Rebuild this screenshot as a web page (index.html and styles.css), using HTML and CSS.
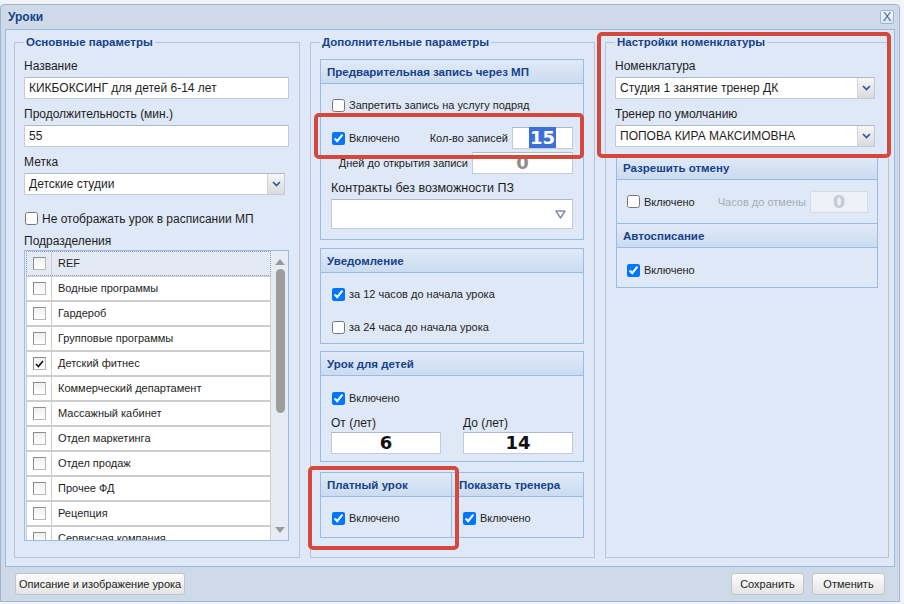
FILE: index.html
```html
<!DOCTYPE html>
<html lang="ru">
<head>
  <meta charset="UTF-8">
  <title>Уроки</title>
  <link rel="stylesheet" href="styles.css">
</head>
<body>
  <div class="window">
    <!-- Title bar -->
    <div class="window-head">
      <span class="window-title">Уроки</span>
      <span class="window-close">X</span>
    </div>

    <div class="window-body">
      <!-- Main parameters -->
      <fieldset class="group">
        <legend>Основные параметры</legend>
        <div class="field-label first">Название</div>
        <div class="text-field">КИКБОКСИНГ для детей 6-14 лет</div>
        <div class="field-label">Продолжительность (мин.)</div>
        <div class="text-field">55</div>
        <div class="field-label">Метка</div>
        <div class="combo combo-short">
          <span class="combo-text">Детские студии</span>
          <span class="combo-trigger"><svg width="9" height="6" viewBox="0 0 9 6"><path d="M1 1 L4.5 4.5 L8 1" stroke="#2f5797" stroke-width="1.7" fill="none"/></svg></span>
        </div>
        <label class="check check-hide"><input type="checkbox"> Не отображать урок в расписании МП</label>
        <div class="field-label grid-label">Подразделения</div>

        <div class="grid">
          <div class="grid-rows">
            <div class="grid-row selected"><span class="grid-check"><span class="gbox"></span></span><span class="grid-text">REF</span></div>
            <div class="grid-row"><span class="grid-check"><span class="gbox"></span></span><span class="grid-text">Водные программы</span></div>
            <div class="grid-row"><span class="grid-check"><span class="gbox"></span></span><span class="grid-text">Гардероб</span></div>
            <div class="grid-row"><span class="grid-check"><span class="gbox"></span></span><span class="grid-text">Групповые программы</span></div>
            <div class="grid-row"><span class="grid-check"><span class="gbox"><svg width="9" height="8" viewBox="0 0 9 8"><path d="M1 4 L3.4 6.5 L8 1" stroke="#111" stroke-width="1.6" fill="none"/></svg></span></span><span class="grid-text">Детский фитнес</span></div>
            <div class="grid-row"><span class="grid-check"><span class="gbox"></span></span><span class="grid-text">Коммерческий департамент</span></div>
            <div class="grid-row"><span class="grid-check"><span class="gbox"></span></span><span class="grid-text">Массажный кабинет</span></div>
            <div class="grid-row"><span class="grid-check"><span class="gbox"></span></span><span class="grid-text">Отдел маркетинга</span></div>
            <div class="grid-row"><span class="grid-check"><span class="gbox"></span></span><span class="grid-text">Отдел продаж</span></div>
            <div class="grid-row"><span class="grid-check"><span class="gbox"></span></span><span class="grid-text">Прочее ФД</span></div>
            <div class="grid-row"><span class="grid-check"><span class="gbox"></span></span><span class="grid-text">Рецепция</span></div>
            <div class="grid-row"><span class="grid-check"><span class="gbox"></span></span><span class="grid-text">Сервисная компания</span></div>
          </div>
          <div class="grid-scroll">
            <svg width="10" height="6" viewBox="0 0 10 6"><path d="M5 0 L10 6 L0 6 Z" fill="#9b9b9b"/></svg>
            <span class="scroll-thumb"></span>
            <svg class="scroll-down" width="10" height="6" viewBox="0 0 10 6"><path d="M0 0 L10 0 L5 6 Z" fill="#9b9b9b"/></svg>
          </div>
        </div>
      </fieldset>

      <!-- Extra parameters -->
      <fieldset class="group">
        <legend>Дополнительные параметры</legend>

        <div class="panel panel-booking">
          <div class="panel-head">Предварительная запись через МП</div>
          <div class="panel-body booking-body">
            <label class="check row"><input type="checkbox"> Запретить запись на услугу подряд</label>
            <div class="row row-count">
              <label class="check"><input type="checkbox" checked> Включено</label>
              <span class="pair">Кол-во записей <span class="num-field count-field"><span class="sel">15</span></span></span>
            </div>
            <div class="row row-days">
              <span class="pair">Дней до открытия записи <span class="num-field days-field">0</span></span>
            </div>
            <div class="field-label contract-label">Контракты без возможности ПЗ</div>
            <div class="combo combo-tall">
              <span class="combo-text"></span>
              <span class="combo-open"><svg width="11" height="9" viewBox="0 0 11 9"><path d="M1 1 L10 1 L5.5 8 Z" stroke="#7f93ad" stroke-width="1.5" fill="none" stroke-linejoin="round"/></svg></span>
            </div>
          </div>
        </div>

        <div class="panel panel-notice">
          <div class="panel-head">Уведомление</div>
          <div class="panel-body notice-body">
            <label class="check"><input type="checkbox" checked> за 12 часов до начала урока</label>
            <label class="check"><input type="checkbox"> за 24 часа до начала урока</label>
          </div>
        </div>

        <div class="panel panel-kids">
          <div class="panel-head">Урок для детей</div>
          <div class="panel-body kids-body">
            <label class="check"><input type="checkbox" checked> Включено</label>
            <div class="age-grid">
              <span>От (лет)</span>
              <span>До (лет)</span>
              <span class="num-field age-field">6</span>
              <span class="num-field age-field">14</span>
            </div>
          </div>
        </div>

        <div class="panel-pair">
          <div class="panel">
            <div class="panel-head">Платный урок</div>
            <div class="panel-body flag-body">
              <label class="check"><input type="checkbox" checked> Включено</label>
            </div>
          </div>
          <div class="panel panel-joined">
            <div class="panel-head">Показать тренера</div>
            <div class="panel-body flag-body">
              <label class="check"><input type="checkbox" checked> Включено</label>
            </div>
          </div>
        </div>
      </fieldset>

      <!-- Nomenclature settings -->
      <fieldset class="group group-right">
        <legend>Настройки номенклатуры</legend>
        <div class="field-label first">Номенклатура</div>
        <div class="combo combo-wide">
          <span class="combo-text">Студия 1 занятие тренер ДК</span>
          <span class="combo-trigger"><svg width="9" height="6" viewBox="0 0 9 6"><path d="M1 1 L4.5 4.5 L8 1" stroke="#2f5797" stroke-width="1.7" fill="none"/></svg></span>
        </div>
        <div class="field-label">Тренер по умолчанию</div>
        <div class="combo combo-wide">
          <span class="combo-text">ПОПОВА КИРА МАКСИМОВНА</span>
          <span class="combo-trigger"><svg width="9" height="6" viewBox="0 0 9 6"><path d="M1 1 L4.5 4.5 L8 1" stroke="#2f5797" stroke-width="1.7" fill="none"/></svg></span>
        </div>

        <div class="panel panel-side panel-cancel">
          <div class="panel-head">Разрешить отмену</div>
          <div class="panel-body cancel-body">
            <label class="check"><input type="checkbox"> Включено</label>
            <span class="pair pair-off">Часов до отмены <span class="num-field off-field">0</span></span>
          </div>
        </div>
        <div class="panel panel-side panel-auto">
          <div class="panel-head">Автосписание</div>
          <div class="panel-body auto-body">
            <label class="check"><input type="checkbox" checked> Включено</label>
          </div>
        </div>
      </fieldset>
    </div>

    <div class="window-foot">
      <button class="btn">Описание и изображение урока</button>
      <span class="foot-spacer"></span>
      <button class="btn">Сохранить</button>
      <button class="btn">Отменить</button>
    </div>

    <!-- Red review marks -->
    <div class="mark mark-nomen"></div>
    <div class="mark mark-count"></div>
    <div class="mark mark-paid"></div>
  </div>
</body>
</html>
```

FILE: styles.css
```css
* {
  box-sizing: border-box;
}

body {
  margin: 0;
  background: #f2f4f7;
  font-family: "Liberation Sans", Arial, sans-serif;
  font-size: 12px;
  color: #1e1e1e;
}

/* Window frame */
.window {
  position: relative;
  width: 900px;
  height: 598px;
  margin-top: 4px;
  padding: 0 4px;
  background: #cfdae8;
  border: 1px solid #9fb5d1;
  border-radius: 4px 4px 0 0;
  display: flex;
  flex-direction: column;
}

.window-head {
  height: 24px;
  flex: none;
  display: flex;
  align-items: center;
  justify-content: space-between;
  padding: 0 1px 0 3px;
}

.window-title {
  font-weight: bold;
  color: #15428b;
}

.window-close {
  width: 14px;
  height: 14px;
  border: 1px solid #9ab5da;
  border-radius: 2px;
  background: linear-gradient(#f4f8fd, #dce7f5);
  color: #47679a;
  font-size: 13px;
  line-height: 12px;
  text-align: center;
}

.window-body {
  flex: none;
  height: 538px;
  border: 1px solid #99bbe8;
  background: #dfe8f6;
  padding: 5px 6px 8px 8px;
  display: grid;
  grid-template-columns: 286px 285px 284px;
  column-gap: 10px;
}

/* Fieldsets */
.group {
  margin: 0;
  min-width: 0;
  height: 523px;
  padding: 0 10px 0 9px;
  border: 1px solid #b6c4d6;
}

.group legend {
  padding: 0 2px;
  font-size: 11.5px;
  font-weight: bold;
  color: #15428b;
  line-height: 14px;
}

.field-label {
  line-height: 15px;
  margin: 8px 0 3px;
}

.field-label.first {
  margin-top: 10px;
}

.text-field {
  height: 22px;
  border: 1px solid #c3cbd6;
  border-top-color: #aeb8c6;
  background: #fff;
  padding: 0 4px;
  line-height: 20px;
}

/* Combo boxes */
.combo {
  display: flex;
  height: 22px;
  border: 1px solid #c3cbd6;
  border-top-color: #aeb8c6;
  background: #fff;
}

.combo-short {
  width: 261px;
}

.combo-wide {
  width: 260px;
}

.combo-tall {
  height: 30px;
}

.combo-text {
  flex: 1;
  padding-left: 4px;
  line-height: 20px;
}

.combo-trigger {
  width: 17px;
  border-left: 1px solid #cfd3d8;
  background: linear-gradient(#f7f7f7, #d8dadd);
  display: flex;
  align-items: center;
  justify-content: center;
}

.combo-open {
  width: 24px;
  display: flex;
  align-items: center;
  justify-content: center;
}

/* Checkboxes */
.check {
  display: flex;
  align-items: center;
  gap: 4px;
  height: 20px;
  font-size: 11px;
  white-space: nowrap;
}

.check input {
  width: 13px;
  height: 13px;
  margin: 0 0 0 1px;
}

.check-hide {
  margin-top: 16px;
  height: 15px;
  font-size: 12px;
}

.grid-label {
  margin-top: 8px;
  margin-bottom: 1px;
}

/* Department grid */
.grid {
  display: flex;
  height: 291px;
  border: 1px solid #99bbe8;
  background: #e6ecf4;
}

.grid-rows {
  flex: 1;
  overflow: hidden;
  padding: 0 1px;
}

.grid-row {
  display: flex;
  height: 25px;
  border: 1px solid #cdcdcd;
  background: #fff;
  font-size: 11px;
}

.grid-row.selected {
  background: #e4eaf3;
  border: 1px dotted #8f9cb0;
}

.grid-check {
  width: 25px;
  border-right: 1px solid #cdcdcd;
  display: flex;
  align-items: center;
  justify-content: center;
}

.gbox {
  width: 13px;
  height: 13px;
  border: 1px solid #8c8c8c;
  border-right-color: #b8b8b8;
  border-bottom-color: #b8b8b8;
  background: linear-gradient(#f0f0f0, #ffffff);
  display: flex;
  align-items: center;
  justify-content: center;
}

.grid-text {
  padding-left: 6px;
  line-height: 23px;
}

.grid-scroll {
  width: 16px;
  display: flex;
  flex-direction: column;
  align-items: center;
  padding-top: 8px;
}

.scroll-thumb {
  width: 9px;
  height: 144px;
  margin-top: 4px;
  border-radius: 5px;
  background: #9d9d9d;
}

.scroll-down {
  margin-top: auto;
  margin-bottom: 7px;
}

/* Panels */
.panel {
  border: 1px solid #99bbe8;
  background: #dfe8f6;
}

.panel-head {
  height: 24px;
  border-bottom: 1px solid #99bbe8;
  background: linear-gradient(#e1eaf7, #cbdbf0);
  padding-left: 6px;
  line-height: 24px;
  font-size: 11.5px;
  font-weight: bold;
  color: #15428b;
  white-space: nowrap;
}

.panel-booking {
  margin-top: 10px;
}

.booking-body {
  padding: 10px 10px 10px 10px;
}

.row {
  display: flex;
  align-items: center;
  height: 22px;
}

.row-count {
  margin-top: 11px;
  justify-content: space-between;
}

.row-days {
  margin-top: 3px;
  justify-content: flex-end;
}

.pair {
  display: flex;
  align-items: center;
  gap: 4px;
  font-size: 11px;
  white-space: nowrap;
}

.num-field {
  height: 22px;
  border: 1px solid #c3cbd6;
  border-top-color: #aeb8c6;
  background: #fff;
  text-align: center;
  font-family: "DejaVu Sans", Verdana, sans-serif;
  font-weight: bold;
  font-size: 18px;
  line-height: 20px;
}

.count-field {
  width: 61px;
}

.sel {
  background: #3c6fd7;
  color: #fff;
  padding: 0 1px;
}

.days-field {
  width: 101px;
  color: #8b8b8b;
}

.contract-label {
  margin: 7px 0 3px;
  font-size: 12.5px;
}

.panel-notice {
  margin-top: 8px;
}

.notice-body {
  padding: 11px 10px 6px;
  display: flex;
  flex-direction: column;
  gap: 13px;
}

.panel-kids {
  margin-top: 7px;
}

.kids-body {
  padding: 12px 11px 7px 10px;
}

.age-grid {
  display: grid;
  grid-template-columns: 110px 110px;
  column-gap: 22px;
  margin-top: 8px;
  line-height: 15px;
}

.age-field {
  margin-top: 1px;
  color: #111;
}

.panel-pair {
  display: grid;
  grid-template-columns: 132px 132px;
  margin-top: 10px;
}

.panel-joined {
  border-left: none;
}

.panel-joined .panel-head {
  padding-left: 7px;
}

.flag-body {
  padding: 11px 10px 9px;
}

/* Right column panels */
.panel-side {
  margin-left: 1px;
}

.panel-cancel {
  margin-top: 8px;
}

.cancel-body {
  display: flex;
  align-items: center;
  justify-content: space-between;
  height: 43px;
  padding: 0 9px 0 9px;
}

.pair-off {
  color: #a3adbb;
}

.off-field {
  width: 58px;
  background: #eef2f8;
  border-color: #d3dbe6;
  color: #c3cbd5;
}

.panel-auto {
  margin-top: -1px;
}

.auto-body {
  padding: 12px 9px 7px;
}

/* Footer buttons */
.window-foot {
  display: flex;
  align-items: flex-start;
  gap: 8px;
  padding: 6px 10px 0 10px;
}

.foot-spacer {
  flex: 1;
}

.btn {
  height: 22px;
  min-width: 73px;
  padding: 0 3px;
  border: 1px solid #c2c4c8;
  border-radius: 3px;
  background: linear-gradient(#fdfdfd, #e4e4e4);
  font-family: "Liberation Sans", Arial, sans-serif;
  font-size: 11px;
  color: #222;
}

/* Review marks over the form */
.mark {
  position: absolute;
  border: 4px solid #d34a3d;
  border-radius: 5px;
  pointer-events: none;
}

.mark-nomen {
  left: 596px;
  top: 27px;
  width: 294px;
  height: 126px;
}

.mark-count {
  left: 313px;
  top: 108px;
  width: 270px;
  height: 46px;
}

.mark-paid {
  left: 307px;
  top: 461px;
  width: 151px;
  height: 84px;
}
```
